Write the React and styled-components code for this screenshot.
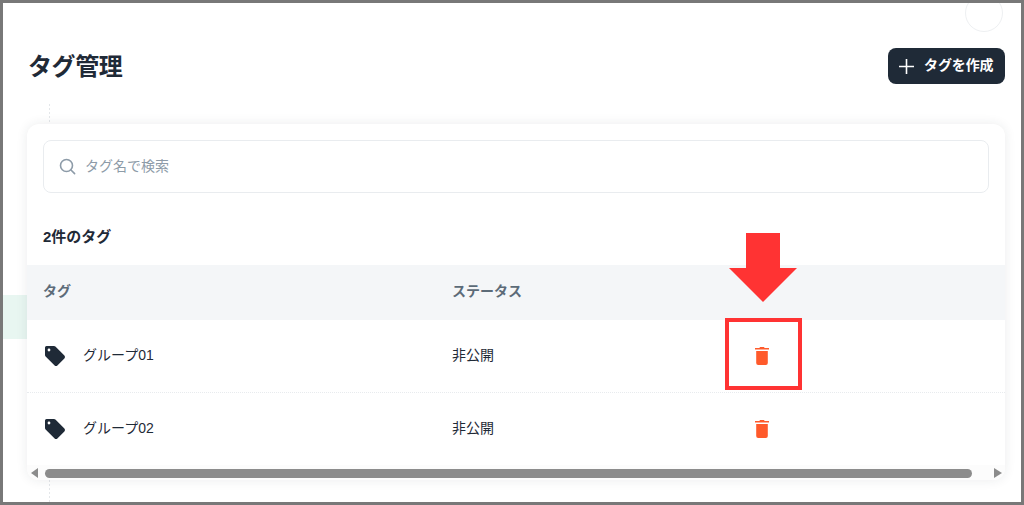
import React from 'react';
import styled, { createGlobalStyle } from 'styled-components';

const GlobalStyle = createGlobalStyle`
    html, body {
        margin: 0;
        padding: 0;
        background: #fff;
    }
    body {
        font-family: "Liberation Sans", "Noto Sans CJK JP", sans-serif;
        color: #1f2a37;
    }
`;

// sidebar remnants behind the card are painted as backgrounds of the frame
const Frame = styled.div`
    position: relative;
    box-sizing: border-box;
    width: 1024px;
    height: 505px;
    overflow: hidden;
    border: 3px solid #787878;
    padding: 0 16px 0 24px;
    background:
        linear-gradient(#e8f6f1, #e8f6f1) 0 292px / 24px 44px no-repeat,
        repeating-linear-gradient(#e4e7ea 0 2px, transparent 2px 4px) 46px 101px / 1px 400px no-repeat,
        #fff;
`;

const TopBar = styled.div`
    display: flex;
    justify-content: flex-end;
    height: 45px;
    padding-right: 2px;
    overflow: hidden;
`;

const Avatar = styled.div`
    box-sizing: border-box;
    width: 38px;
    height: 38px;
    margin-top: -9px;
    border: 1px solid #eef0f2;
    border-radius: 50%;
    background: #fff;
`;

const Header = styled.div`
    display: flex;
    align-items: center;
    justify-content: space-between;
    height: 36px;
    margin-bottom: 40px;
`;

const Title = styled.h1`
    margin: 2px 0 0 1px;
    font-size: 24px;
    font-weight: 700;
    line-height: 36px;
    letter-spacing: -0.4px;
    color: #1f2a37;
`;

const CreateButton = styled.button`
    display: flex;
    align-items: center;
    gap: 9px;
    box-sizing: border-box;
    width: 117px;
    height: 36px;
    padding: 0 0 0 10px;
    border: 0;
    border-radius: 8px;
    background: #1f2a37;
    color: #fff;
    font: 700 14px "Liberation Sans", "Noto Sans CJK JP", sans-serif;
    line-height: 32px;
`;

const ButtonLabel = styled.span`
    margin-top: -3px;
    letter-spacing: -0.1px;
`;

const Card = styled.section`
    height: 356px;
    border-radius: 12px;
    background: #fff;
    box-shadow: 0 0 12px rgba(31, 42, 55, 0.09);
    overflow: hidden;
`;

const SearchBox = styled.div`
    display: flex;
    align-items: center;
    gap: 9px;
    box-sizing: border-box;
    height: 53px;
    margin: 16px 16px 0;
    padding-left: 15px;
    border: 1px solid #e9ecef;
    border-radius: 8px;
    color: #8d9ba8;
    font-size: 14px;
`;

const SearchLabel = styled.span`
    margin-top: -4px;
`;

const Count = styled.h2`
    margin: 0;
    padding: 0 16px;
    height: 72px;
    line-height: 88px;
    font-size: 15px;
    font-weight: 700;
    color: #1f2a37;
`;

const Row = styled.div`
    display: grid;
    grid-template-columns: 409px 273px 1fr;
    align-items: center;
    box-sizing: border-box;
    height: ${(props) => props.$height}px;
    padding-left: 16px;
    font-size: 14px;
    color: #1f2a37;
    background: ${(props) => (props.$head ? '#f4f6f8' : '#fff')};
    border-bottom: ${(props) => (props.$divider ? '1px dotted #e8ebee' : '0')};
`;

const HeadCell = styled.div`
    margin-top: -5px;
    font-size: 14px;
    font-weight: 700;
    color: #5c6b78;
`;

const BodyText = styled.span`
    margin-top: -4px;
`;

const TagCell = styled.div`
    display: flex;
    align-items: center;
    gap: 17px;
    padding-left: 1px;
    margin-top: -1px;
`;

const TrashCell = styled.div`
    display: flex;
    width: 18px;
    justify-content: center;
    margin-left: 28px;
    margin-top: -1px;
`;

const ScrollBar = styled.div`
    display: flex;
    align-items: center;
    height: 16px;
    padding: 0 3px 0 4px;
    background: #fcfcfc;
`;

const ScrollArrow = styled.div`
    width: 0;
    height: 0;
    border-style: solid;
    border-color: transparent;
    border-width: 5px 0 5px 0;
    ${(props) =>
        props.$right
            ? 'border-left: 8px solid #8c8c8c; margin-left: 22px;'
            : 'border-right: 7px solid #8c8c8c; margin-right: 7px;'}
`;

const ScrollThumb = styled.div`
    width: 927px;
    height: 9px;
    border-radius: 5px;
    background: #8c8c8c;
`;

const DownArrow = styled.svg`
    position: absolute;
    left: 726px;
    top: 230px;
`;

const Highlight = styled.div`
    position: absolute;
    left: 722px;
    top: 315px;
    box-sizing: border-box;
    width: 77px;
    height: 72px;
    border: 4px solid #ff3333;
`;

const TagIcon = () => (
    <svg width="22" height="22" viewBox="0 0 22 22">
        <path
            fillRule="evenodd"
            fill="#1f2a37"
            d="M2.5 1H10a2 2 0 0 1 1.4.6l9 9a2 2 0 0 1 0 2.8l-7 7a2 2 0 0 1-2.8 0l-9-9A2 2 0 0 1 1 10V2.5A1.5 1.5 0 0 1 2.5 1ZM5 3.6a1.4 1.4 0 1 0 0 2.8 1.4 1.4 0 0 0 0-2.8Z"
        />
    </svg>
);

const TrashIcon = () => (
    <svg width="14" height="18" viewBox="0 0 14 18">
        <path fill="#ff5a2b" d="M5 0h4l.6 1H14v1.6H0V1h4.4L5 0Z" />
        <path fill="#ff5a2b" d="M1.2 4h11.6v12a2 2 0 0 1-2 2H3.2a2 2 0 0 1-2-2V4Z" />
    </svg>
);

const rows = [
    { name: 'グループ01', height: 73, divider: true },
    { name: 'グループ02', height: 72, divider: false },
];

const App = () => (
    <>
        <GlobalStyle />
        <Frame>
            <TopBar>
                <Avatar />
            </TopBar>
            <Header>
                <Title>タグ管理</Title>
                <CreateButton>
                    <svg width="17" height="17" viewBox="0 0 17 17">
                        <path stroke="#fff" strokeWidth="1.6" d="M8.5 1v15M1 8.5h15" />
                    </svg>
                    <ButtonLabel>タグを作成</ButtonLabel>
                </CreateButton>
            </Header>
            <Card>
                <SearchBox>
                    <svg width="17" height="17" viewBox="0 0 17 17" fill="none">
                        <circle cx="7.5" cy="7.5" r="6" stroke="#8d9ba8" strokeWidth="1.6" />
                        <path stroke="#8d9ba8" strokeWidth="1.6" strokeLinecap="round" d="M12 12l3.6 3.6" />
                    </svg>
                    <SearchLabel>タグ名で検索</SearchLabel>
                </SearchBox>
                <Count>2件のタグ</Count>
                <Row $head $height={55}>
                    <HeadCell>タグ</HeadCell>
                    <HeadCell>ステータス</HeadCell>
                </Row>
                {rows.map((row) => (
                    <Row key={row.name} $height={row.height} $divider={row.divider}>
                        <TagCell>
                            <TagIcon />
                            <BodyText>{row.name}</BodyText>
                        </TagCell>
                        <BodyText>非公開</BodyText>
                        <TrashCell>
                            <TrashIcon />
                        </TrashCell>
                    </Row>
                ))}
                <ScrollBar>
                    <ScrollArrow />
                    <ScrollThumb />
                    <ScrollArrow $right />
                </ScrollBar>
            </Card>
            <DownArrow width="68" height="69" viewBox="0 0 68 69">
                <path fill="#ff3333" d="M17 0h34v35h17L34 69 0 35h17Z" />
            </DownArrow>
            <Highlight />
        </Frame>
    </>
);

export default App;
